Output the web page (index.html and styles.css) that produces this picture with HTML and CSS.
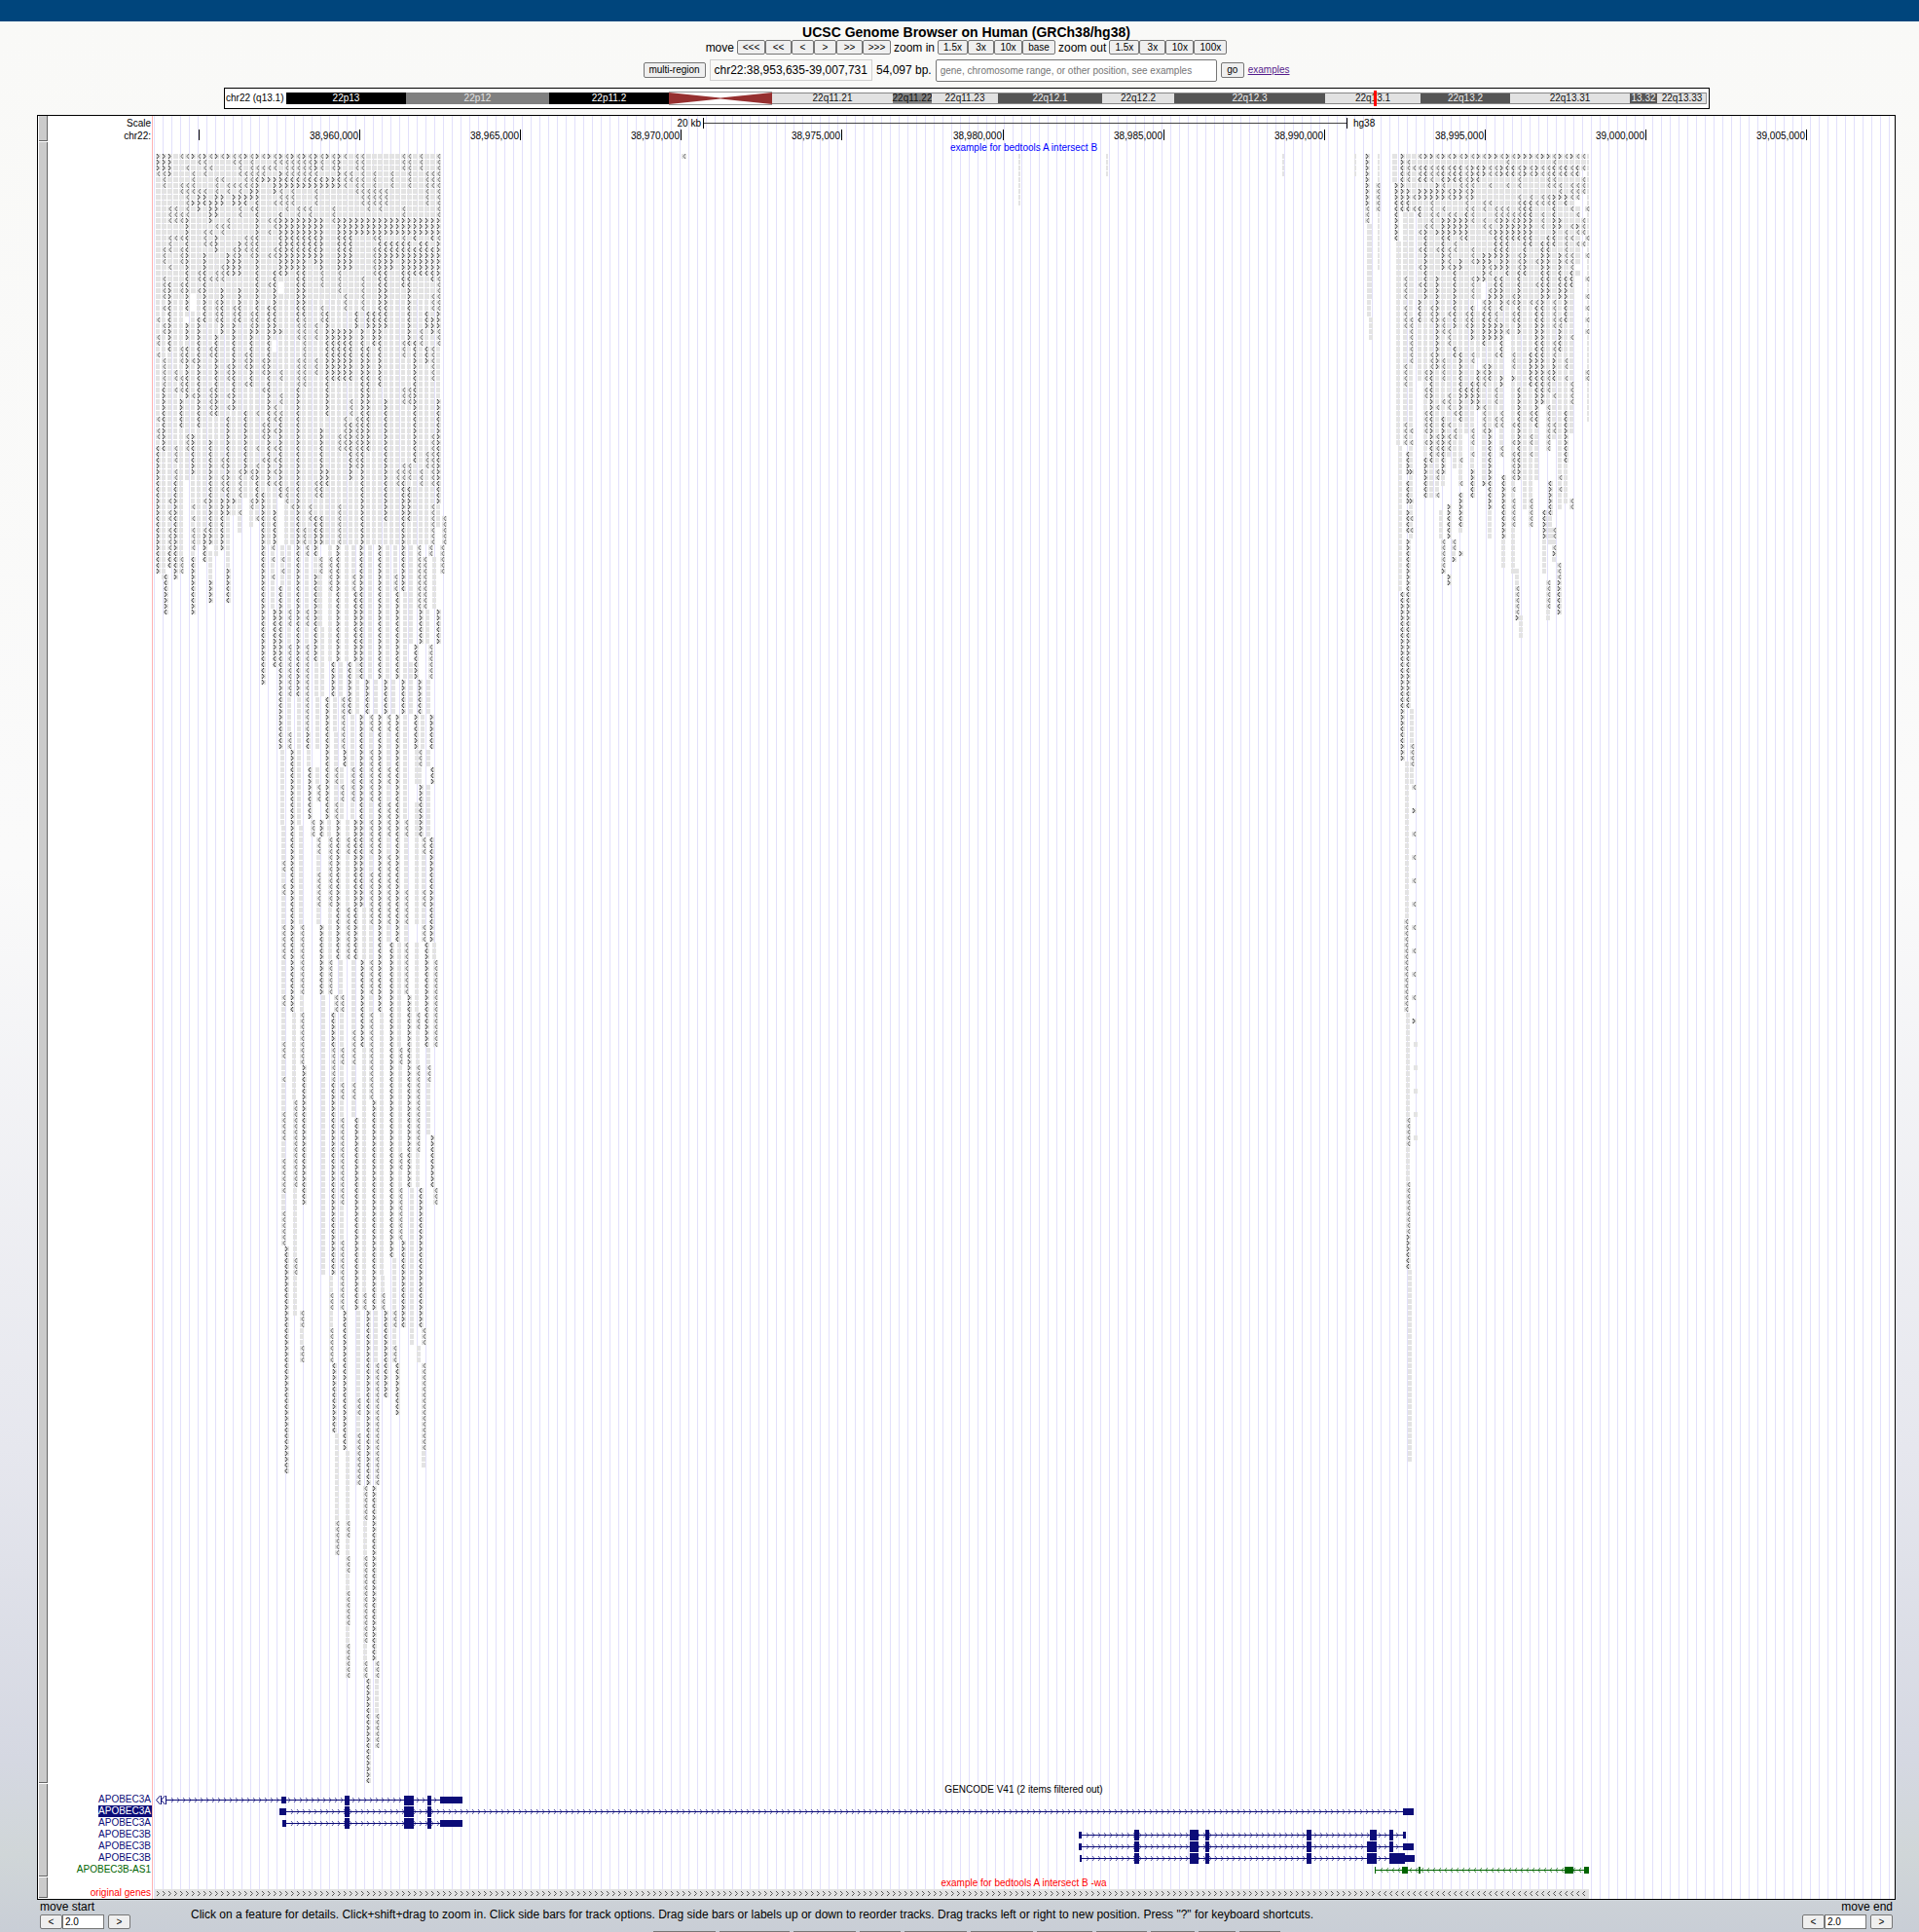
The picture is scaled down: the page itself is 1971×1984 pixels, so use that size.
FILE: index.html
```html
<!DOCTYPE html>
<html lang="en">
<head>
<meta charset="utf-8">
<title>UCSC Genome Browser on Human (GRCh38/hg38)</title>
<link rel="stylesheet" href="styles.css">
</head>
<body>
<div class="topbar"></div>
<main class="page">
  <header class="head">
    <h1 class="title">UCSC Genome Browser on Human (GRCh38/hg38)</h1>
    <div class="nav">
      <span>move</span>
      <div class="group"><button class="w29">&lt;&lt;&lt;</button><button class="w27">&lt;&lt;</button><button class="w23">&lt;</button><button class="w23">&gt;</button><button class="w27">&gt;&gt;</button><button class="w29">&gt;&gt;&gt;</button></div>
      <span>zoom in</span>
      <div class="group"><button class="w31">1.5x</button><button class="w27">3x</button><button class="w29">10x</button><button class="w34">base</button></div>
      <span>zoom out</span>
      <div class="group"><button class="w31">1.5x</button><button class="w27">3x</button><button class="w29">10x</button><button class="w34">100x</button></div>
    </div>
    <form class="search" onsubmit="return false">
      <button class="tall w64">multi-region</button>
      <span class="position">chr22:38,953,635-39,007,731</span>
      <span>54,097 bp.</span>
      <input class="find" type="text" aria-label="Position or search term" placeholder="gene, chromosome range, or other position, see examples">
      <button class="tall w24">go</button>
      <a class="examples" href="#examples">examples</a>
    </form>
  </header>

  <div class="ideogram">
    <svg id="ideo" width="1524" height="20" role="img" aria-label="chr22 ideogram"></svg>
  </div>

  <section class="panel">
    <div class="track">
      <button class="side" aria-label="Ruler options"></button>
      <div class="labels ruler-labels"><span>Scale</span><span>chr22:</span></div>
      <div class="plot"><svg id="ruler" width="100%" height="27"></svg></div>
    </div>
    <div class="track">
      <button class="side" aria-label="Intersect track options"></button>
      <div class="labels"></div>
      <div class="plot">
        <div class="caption blue">example for bedtools A intersect B</div>
        <svg id="reads" width="100%" height="1674"></svg>
      </div>
    </div>
    <div class="track">
      <button class="side" aria-label="GENCODE options"></button>
      <div class="labels gene-labels">
        <a href="#g1">APOBEC3A</a><a class="picked" href="#g2">APOBEC3A</a><a href="#g3">APOBEC3A</a><a href="#g4">APOBEC3B</a><a href="#g5">APOBEC3B</a><a href="#g6">APOBEC3B</a><a class="green" href="#g7">APOBEC3B-AS1</a>
      </div>
      <div class="plot">
        <div class="caption">GENCODE V41 (2 items filtered out)</div>
        <svg id="genes" width="100%" height="84"></svg>
      </div>
    </div>
    <div class="track">
      <button class="side" aria-label="Original genes options"></button>
      <div class="labels gene-labels"><a class="red" href="#orig">original genes</a></div>
      <div class="plot">
        <div class="caption red">example for bedtools A intersect B -wa</div>
        <svg id="orig" width="100%" height="10"></svg>
      </div>
    </div>
  </section>

  <footer class="foot">
    <div class="shift">
      <label for="start">move start</label>
      <div class="shift-row"><button class="w23">&lt;</button><input id="start" type="text" value="2.0"><button class="w23 apart">&gt;</button></div>
    </div>
    <p class="help">Click on a feature for details. Click+shift+drag to zoom in. Click side bars for track options. Drag side bars or labels up or down to reorder tracks. Drag tracks left or right to new position. Press "?" for keyboard shortcuts.</p>
    <div class="shift end">
      <label for="end">move end</label>
      <div class="shift-row"><button class="w23">&lt;</button><input id="end" type="text" value="2.0"><button class="w23 apart">&gt;</button></div>
    </div>
  </footer>
  <div class="next-row"><i class="w64"></i><i class="w72"></i><i class="w64"></i><i class="w42"></i><i class="w64"></i><i class="w64"></i><i class="w57"></i><i class="w52"></i><i class="w45"></i><i class="w38"></i><i class="w42"></i></div>
</main>
<script src="tracks.js"></script>
</body>
</html>
```

FILE: styles.css
```css
* { box-sizing: border-box; }
html { min-height: 100%; }
body {
  margin: 0;
  font: 12px/14px "Liberation Sans", Arial, sans-serif;
  color: #000;
  background: linear-gradient(#f9f9f7 0%, #fafafa 45%, #e6e7ee 75%, #d5d8e2 91%, #d0d6d8 96%, #c9ced6 100%);
}
.topbar { height: 22px; background: #00457c; }
.page { margin: 0 24px 0 38px; }
.head { display: flex; flex-direction: column; align-items: center; }
.title { margin: 3px 0 0; font-size: 14px; line-height: 16px; font-weight: bold; }
.nav { display: flex; align-items: center; gap: 3px; height: 15px; }
.group { display: flex; }
button {
  height: 15px;
  padding: 0;
  border: 1px solid #767676;
  border-radius: 2px;
  background: #efefef;
  color: #000;
  font: 10px/12px "Liberation Sans", Arial, sans-serif;
}
.tall { height: 16px; }
.w23 { width: 23px; }
.w24 { width: 24px; }
.w27 { width: 27px; }
.w29 { width: 29px; }
.w31 { width: 31px; }
.w34 { width: 34px; }
.w38 { width: 38px; }
.w42 { width: 42px; }
.w45 { width: 45px; }
.w52 { width: 52px; }
.w57 { width: 57px; }
.w64 { width: 64px; }
.w72 { width: 72px; }
.search { display: flex; align-items: center; gap: 4px; height: 24px; margin-top: 4px; }
.position { padding: 3px 4px; border: 1px solid #d0d0d0; height: 22px; }
.find {
  width: 289px;
  height: 23px;
  padding: 1px 4px;
  border: 1px solid #767676;
  border-radius: 2px;
  background: #fff;
  font: 10px/12px "Liberation Sans", Arial, sans-serif;
}
.find::placeholder { color: #757575; }
.examples { font-size: 10px; color: #551a8b; }

.ideogram { width: fit-content; margin: 6px auto 0; border: 1px solid #000; background: #fff; }
svg { display: block; overflow: hidden; }
svg text { font: 10px "Liberation Sans", Arial, sans-serif; }

.panel { margin-top: 6px; border: 1px solid #000; background: #fff; }
.track { display: grid; grid-template-columns: 10px 107px 1fr; }
.side {
  width: 9px;
  height: auto;
  margin: 0 0 1px 1px;
  border-width: 0 1px 1px 0;
  border-color: #666;
  border-radius: 0;
  background: #cbcbcb;
}
.labels { padding-right: 1px; text-align: right; font-size: 10px; }
.ruler-labels { display: flex; flex-direction: column; line-height: 13px; padding-top: 1px; }
.gene-labels { display: flex; flex-direction: column; align-items: flex-end; padding-top: 10px; padding-right: 0; line-height: 12px; }
.gene-labels a { padding-right: 1px; color: #0c0c78; text-decoration: none; }
.gene-labels .picked { background: #0c0c78; color: #fff; }
.gene-labels .green { color: #006400; }
.gene-labels .red, .red { color: #f00; }
.blue { color: #00f; }
.plot {
  min-width: 0;
  border-left: 1px solid #ffb3b3;
  background: linear-gradient(90deg, #e2e0fb 1px, transparent 1px) 10px 0 / 9px 100%;
}
.caption { text-align: center; font-size: 10px; line-height: 12px; height: 12px; }

.foot { display: flex; justify-content: space-between; padding: 0 3px; height: 32px; }
.shift { display: flex; flex-direction: column; gap: 1px; line-height: 14px; }
.shift-row { display: flex; }
.shift-row input { width: 43px; height: 15px; padding: 0 2px; border: 1px solid #767676; font: 10px/12px "Liberation Sans", Arial, sans-serif; }
.apart { margin-left: 4px; }
.end { text-align: right; }
.help { flex: 1; margin: 8px 0 0 62px; }
.next-row { display: flex; justify-content: center; gap: 4px; height: 1px; }
.next-row i { background: #767676; }
```

FILE: tracks.js
```js
// Shared helpers. Drawing coordinates are those of the whole browser image;
// each track shifts them by its own origin.
const NS = 'http://www.w3.org/2000/svg';
function add(parent, tag, attrs, text) {
  const el = document.createElementNS(NS, tag);
  for (const key in attrs) el.setAttribute(key, attrs[key]);
  if (text) el.textContent = text;
  parent.appendChild(el);
  return el;
}
function layer(id, x, y) {
  return add(document.getElementById(id), 'g', { transform: `translate(${-x} ${-y})` });
}

// Chromosome ideogram: name, start, end, fill, text colour
const ideo = layer('ideo', 231, 91);
add(ideo, 'text', { x: 232, y: 104 }, 'chr22 (q13.1)');
[
  ['22p13', 294, 417, '#000', '#fff'], ['22p12', 417, 564, '#808080', '#e4e4e4'], ['22p11.2', 564, 687, '#000', '#fff'],
  ['22q11.21', 793, 917, '#e2e2e2', '#111'], ['22q11.22', 917, 957, '#808080', '#111'], ['22q11.23', 957, 1025, '#e2e2e2', '#111'],
  ['22q12.1', 1025, 1132, '#555', '#eee'], ['22q12.2', 1132, 1206, '#e2e2e2', '#111'], ['22q12.3', 1206, 1361, '#555', '#eee'],
  ['22q13.1', 1361, 1459, '#e2e2e2', '#111'], ['22q13.2', 1459, 1551, '#555', '#eee'], ['22q13.31', 1551, 1674, '#e2e2e2', '#111'],
  ['13.32', 1674, 1702, '#555', '#eee'], ['22q13.33', 1702, 1753, '#e2e2e2', '#111']
].forEach(([name, a, b, fill, ink]) => {
  add(ideo, 'rect', { x: a, y: 95, width: b - a, height: 12, fill });
  if (a > 700) add(ideo, 'path', { d: `M${a} 95.5H${b}M${a} 106.5H${b}`, stroke: '#888' });
  add(ideo, 'text', { x: (a + b) / 2, y: 104, fill: ink, 'text-anchor': 'middle' }, name);
});
add(ideo, 'path', { d: 'M687 95L740 100.500 793 95V107L740 101.500 687 107Z', fill: '#963030' });
add(ideo, 'path', { d: 'M687 94.500H793M687 107.500H793M1752.500 95V107', stroke: '#999' });
add(ideo, 'rect', { x: 1411, y: 93, width: 3, height: 16, fill: '#f00' });

// Ruler
const ruler = layer('ruler', 157, 119);
add(ruler, 'path', { d: 'M723 126.500H1383', stroke: '#444' });
add(ruler, 'path', { d: 'M722.500 121V132M1383.500 121V132', stroke: '#000' });
add(ruler, 'text', { x: 720, y: 130, 'text-anchor': 'end' }, '20 kb');
add(ruler, 'text', { x: 1390, y: 130 }, 'hg38');
['', '38,960,000', '38,965,000', '38,970,000', '38,975,000', '38,980,000', '38,985,000', '38,990,000', '38,995,000', '39,000,000', '39,005,000']
  .forEach((name, i) => {
    const x = 204 + Math.round(i * 165.1);
    add(ruler, 'rect', { x, y: 133, width: 1, height: 11, fill: '#000' });
    if (name) add(ruler, 'text', { x: x - 1, y: 143, 'text-anchor': 'end' }, name);
  });

// Reads. Each entry: left edge, first row, then runs of
// g plain, l reverse, r forward, z mixed strands, n narrow, e nothing.
const upperLeft = [
  [268,0,'l1 g1 l2 r1 g27 g3 l3 g2 l1 g5 l3 g3 l1 g5 z31'],
  [274,0,'r1 g1 l1 g1 r1 g6 l1 g1 l1 g3 l1 g4 l1 g3 z31 g30'],
  [280,0,'l1 l2 g1 r3 g1 l1 g2 l2 g3 l2 g2 z11 g1 e2 g9 l3 g1 l1 g2 l1 g1 l1 g1 l1 g1 l1 g4 z10'],
  [286,0,'r1 l1 g1 r3 l3 g1 z11 g1 e2 g6 r1 g6 l2 g2 l2 g1 l1 z14'],
  [292,0,'l4 z2 g1 l2 l1 g1 r10 g36 l3 g8'],
  [298,0,'r1 l3 z2 l3 g2 z9 g40 l1 g10'],
  [304,0,'l1 l3 z2 g3 l2 r3 z15 l3 g3 l5 z50'],
  [310,0,'r1 l4 z1 g3 l1 g1 z17 l3 l5 l4 g24 l6'],
  [316,0,'l4 z2 g3 l2 z7 g42 l3 g6'],
  [322,0,'r3 l1 z2 l3 g2 z8 g10 l3 g3 l3 g18 l3 g3 z14'],
  [328,0,'l3 g1 z2 g5 r9 l3 g3 l3 g18 z12 g3 z9'],
  [334,0,'r1 g3 r2 g21 z18 g9 z3 g12'],
  [340,0,'l3 g1 r2 g3 l3 g18 z9 g30'],
  [346,0,'r4 z2 g5 z9 l4 g6 z9 g9 l3 g9 l9'],
  [352,0,'l1 g2 l3 g5 z9 g4 l3 g3 z9 g6 l6 g17'],
  [358,0,'g3 l2 g6 z9 g10 z9 g3 l3 g1 z10 g11'],
  [364,0,'l3 g1 l3 g4 z3 g13 z3 g15 l9 g14'],
  [370,0,'l9 r0 g2 z3 g7 l6 g3 z38'],
  [376,0,'g6 l4 g1 z3 g13 z3 g3 z18 g18'],
  [382,0,'g3 l6 g2 z3 l1 g1 l5 g6 z6 g36'],
  [388,0,'g6 l4 g1 z5 z24 g27'],
  [394,0,'g6 l3 g2 z3 g1 z15 g12 z21 g6'],
  [400,0,'g3 l3 g5 z3 g1 z5 g50'],
  [406,0,'g11 z3 g1 z3 g36 l3 g12'],
  [412,0,'l3 g6 l2 r3 l1 z8 g9 l3 g5 l3 g10 l3 z12 l3'],
  [418,0,'l3 l3 g5 z3 g1 z18 g7 l3 g10 l3 g1 z6 g4'],
  [424,0,'g11 z4 g1 z5 g11 z21 g18'],
  [430,0,'l3 g8 z3 g1 z6 g9 l3 g21 l3 g10'],
  [436,0,'g3 l6 g2 z3 g1 z6 g6 z3 g3 z3 g15 l3 g16'],
  [442,0,'g3 l3 g5 z4 g1 z6 g2 l3 g1 r3 g2 l6 g9 l9 g3 l8'],
  [448,0,'l11 r3 l1 r6 l6 r3 l3 g9 z18 g4'],
  [454,62,'l10']
];
const columns = [
  // left cluster, short columns
  [160,0,'r3 l1 g24 l1 g2 l2 g1 l1 g10 l1 g1 l2 g1 z22'],
  [166,0,'r3 l3 g10 l3 g2 l4 g1 l1 g2 l2 g4 l5 z11 g22'],
  [168,72,'z7'],
  [172,0,'r4 g5 l3 g2 l3 g2 l1 g2 z12 g25 l1 g1 l2 g1 l4 z3'],
  [178,0,'g9 l3 g2 l1 g22 l2 g1 l1 g9 l3 g1 l2 z15 r2'],
  [184,0,'l1 g4 l2 g3 l2 g2 l1 g1 l3 g3 l2 g3 g6 l3 g2 l3 g1 z5 g22 l3'],
  [190,0,'l1 g1 l1 g2 l2 l4 z16 g1 e1 z3 g1 z9 g6 l3 g5'],
  [196,0,'r1 g2 l4 g1 r1 g15 e3 g8 l1 g5 l1 g6 z7 g5 l1 g1 l1 g1 l4 g1 z10'],
  [202,0,'l1 l1 g4 l1 r3 g10 l2 g1 l1 g4 z19 g20'],
  [208,0,'r1 l2 l1 g2 l1 z2 g4 l3 g1 z12 g30 l1 g4 l1 z5'],
  [214,0,'l1 g1 l1 g5 r4 g1 l1 g1 l1 g5 l1 g11 l2 g5 l5 g4 z18 e1 g5 r4'],
  [220,0,'r1 g3 l3 r4 g1 l1 g1 r3 g3 l1 l1 g3 l4 g2 z14 g24'],
  [226,0,'l1 g3 l1 g2 r2 g3 l2 g3 g2 l3 g1 z8 g21 l2 g1 l3 g1 z9'],
  [232,0,'r1 g4 l2 g4 l2 g4 z4 g15 l3 g2 l1 g1 l1 g1 z17 g9 z6'],
  [238,0,'l1 l1 g3 l1 g1 r2 g7 l2 r3 g5 l3 z15 g15 r1 g2'],
  [244,0,'l4 g1 l2 r2 l2 g4 r6 g2 z6 g25 l5 g2 l1 g3'],
  [250,0,'r1 g2 l3 g1 z2 g5 l3 g17 l3 g2 l1 g4 z11 g4'],
  [256,0,'l1 l2 l3 r2 g1 l1 g4 l4 g9 l3 z10 g14 l2 g3 l2 g3'],
  [262,0,'r1 g1 l2 z27 g13 l1 g5 l1 g2 l1 z6 g2 l1'],
  // left cluster, rows 67 to 116
  [268,67,'z24'],
  [278,67,'l1 g1 l1 g2 l1 g5'], [280,78,'z10'],
  [288,67,'g2 l1 g1 l1 g2'], [286,74,'z28'], [288,102,'g13'],
  [295,67,'g11 l3 g3 l9 g6 l3'], [298,102,'z45'],
  [304,67,'z26'], [305,93,'g22'],
  [313,67,'l2 g9 l3 g3 l15'], [314,99,'z3'], [315,102,'g3'], [316,105,'z9'], [319,114,'l3'],
  [322,67,'z2 g3 z15'], [323,87,'g6'], [324,93,'g9 e3 g3'], [325,108,'l3'], [328,114,'z3'],
  [327,69,'l3 g9'], [329,81,'g12'], [334,93,'z21'], [336,114,'g3'],
  [337,67,'g2 l6 g12'], [340,87,'z6'], [342,93,'g6'], [343,99,'g6 l3 g3 l3'],
  [345,67,'z20'], [348,87,'g6'], [350,93,'l9'], [352,102,'z3'], [349,105,'g3 l3 g3'], [345,114,'z24'],
  [354,67,'g20'], [357,87,'z9'], [360,96,'g9 l6 g3'], [355,114,'g3 l3 g9 l9'],
  [361,67,'g5 l3'], [363,75,'z12'], [365,87,'g9'], [363,114,'z24'],
  [369,67,'z23 e6 z33'], [375,90,'z6'],
  [378,67,'g23'], [379,96,'l3 g3 l9 g3 l6 g3 l9 g6 l6 g3 l15'], [384,90,'g6'],
  [388,67,'z23'], [394,90,'z6'], [388,96,'z51'],
  [396,67,'g23'], [402,90,'g6'], [397,96,'l3 g6 l3 g3 l6 g3 l12 g3'],
  [404,67,'g5 l3'], [406,75,'z15'], [412,90,'z6'], [406,96,'z39'],
  [412,67,'z8'], [414,75,'g15 e6 g18'], [415,114,'l3 g9 l6 g3 l9'],
  [420,67,'g17 e3 g9'], [425,84,'z6 e6 z6'], [426,102,'g6 e3 g21'],
  [428,67,'l11'], [430,78,'z6'], [429,90,'z6'], [432,96,'g6'], [429,102,'l3 g3'], [430,108,'z9'],
  [434,69,'l9'], [437,78,'g6'], [440,84,'l6'], [438,90,'g6'], [441,96,'z6'], [438,102,'g3'], [442,105,'z3'], [438,108,'g9'],
  [440,67,'l2'], [444,69,'g9'], [448,78,'z6'], [452,67,'l5'],
  // left cluster, rows 115 down
  [289,115,'g6 l2 g2 l2 g5 l6 g6 l2 g6 l3 g3 l1 g5 l5 g3 l6 g3 l6'], [292,187,'z39'],
  [300,147,'g15'], [301,162,'l15 g12 l3 g7'],
  [307,115,'g17'], [308,132,'l12 g3 l9'], [310,156,'z24'], [308,198,'l3 g3 l3'],
  [325,117,'l3 g3 l6 g3'], [328,132,'z12'], [330,144,'g48'],
  [337,117,'l12 g9 l6'], [340,147,'z6 l6 z33'], [338,192,'g3 l3 g3 l6'], [341,207,'z12'], [344,219,'g15 l6'],
  [348,138,'g6'], [343,144,'l3'], [349,144,'l3 g6 l3 g3 l3 g3 l15 g6 l12'], [352,198,'z24'],
  [355,222,'g12 l3 g3 l3 g3 l6 g3 l6'],
  [361,138,'g12 l6 g3 l3 g3'], [364,165,'z33'], [366,198,'g15 l3 g3 l9'],
  [372,129,'g9'], [370,138,'z15'], [372,153,'g42 l3'], [376,198,'z30'], [373,228,'l6 g6 l15 g3 l3'], [376,261,'z18'],
  [382,162,'z36'], [384,198,'g9'], [385,207,'l21'], [382,228,'z30'], [385,258,'l3 g6 l6'],
  [390,147,'g45'], [391,192,'g3 l3'], [394,198,'z15'],
  [400,135,'z54'], [403,189,'g9 l3 g3 l3'], [406,207,'z9'],
  [408,135,'g18'], [409,153,'l3 g15 l3 g3 l9'], [412,186,'z15'],
  [418,144,'z33'], [421,177,'g27'],
  [426,135,'g12'], [427,147,'l3 g6 l15 g6'], [430,177,'z24'], [433,201,'l3'], [428,204,'g3'], [433,207,'l15 g3'],
  [433,117,'l3 g6 l3 g3 l3'], [436,135,'z18'], [438,153,'g3 l3 g9'], [442,168,'z9'], [445,177,'l3'],
  [441,117,'z18'], [444,135,'g3'], [445,138,'l15'],
  // single read and the faint ones between the clusters
  [700,0,'l1'], [1046,0,'n9'], [1136,0,'n4'], [1317,0,'n4'], [1391,0,'n4'],
  // right cluster
  [1402,0,'r9 l3'], [1404,12,'g16'], [1406,28,'g4'],
  [1415,0,'n5'], [1413,5,'l5'], [1415,10,'n10'],
  [1430,0,'g5'], [1432,5,'z10'], [1434,15,'g35'], [1436,50,'g25'], [1438,75,'z29'],
  [1438,0,'z10'], [1441,10,'g11 l4 g1 l4 g6 l4 g6 l4'],
  [1444,51,'z4 e1 z4 e1 z4 e1 z29'],
  [1444,0,'g1 l4 g1 z4'], [1447,10,'g18 l8 g11 l1 g1 l1 g4 r1 g4 r1 g2 l1 g1 l1 g1'],
  [1448,95,'g6 l4 g3'],
  [1450,0,'g2 l1 g4 l1 g1 l1'],
  [1456,0,'l1 g1 l2 z1 g1 r2 g1 z2 g2 l1 g2 l1 g2 l1 g2 l1 g2 z4 g10'],
  [1462,0,'r1 g1 z3 g1 r2 g4 l1 z12 g12 l2 g1 l2 g2 l4 g1 l1 g2 z7'],
  [1468,0,'z1 g1 l3 g1 z2 l1 l4 g13 l3 g5 l3 z16 g6'],
  [1474,0,'l1 g1 l2 g1 z3 g2 l1 g2 r1 g2 l1 g4 r16 g6 l1 g4 l4 g2 l2 g2 l1'],
  [1478,61,'g5'], [1480,66,'l5 r1'],
  [1480,0,'r1 g1 z3 l1 z2 g1 l1 g1 z9 g8 l3 g4 l4 g3 l1 g2 z10 g2'], [1486,60,'z6 e6 z2'],
  [1486,0,'l1 g1 l2 r1 g1 l2 g2 l1 z4 g1 l4 g7 l1 g2 l3 g8 l3 g2 l1 g1 l3 g1'], [1491,66,'l2 g1 r1'],
  [1492,0,'r1 g1 z3 g1 r2 g2 l1 z3 g1 l2 g2 z11 g3 z2 g9 l1 g2 l2 g5'],
  [1498,0,'l1 g1 z3 l1 z2 g3 z3 l1 g3 z2 g14 z12 g6 l1 g3 l1 e1 z6 g1 e3 r1'],
  [1504,0,'r1 g1 l2 l2 l2 l2 z5 g12 l3 g10 z2 g6'],
  [1510,0,'l1 g1 r3 l1 z2 g1 l1 l2 g4 l3 g2 l4 g1 z6 g2 l2 g3 z4 g4 l3 g1 l1 g2 z5'],
  [1516,0,'z1 g1 z3 g13 r1 g2 r1 g3 e2 g2 g6 e2 z7'],
  [1522,0,'l1 g1 r2 g4 l2 g1 l2 g4 z3 r2 e3 l2 z6 g3 l4 g3 l5 g8 r1'],
  [1528,0,'r1 g1 l2 g1 l1 g2 l1 g3 l2 g3 r2 l2 g2 l1 z8 g4 z3 g8 z14 g5'],
  [1534,0,'z1 g1 l2 g5 l3 g1 z5 g1 r1 g1 z4 g2 l2 z3 g2 l1 g5 l3 g2 l2'],
  [1540,0,'l1 g1 r2 g5 l2 z8 r1 g1 z6 g2 z6 g3 r2 g4 l3 g3 l2'], [1542,55,'z11 g5'],
  [1546,0,'r1 l1 z2 g1 l1 g3 l2 z10 g4 l1 g4 l1'],
  [1552,0,'l1 g1 z2 g6 l2 z3 g9 l2 g1 l2 g5 l3 g1 r1 g7 l1 g2 l1 g1 l5 g1 l1 g1 l5 g8'],
  [1558,0,'r1 g1 l2 l2 g1 l4 z4 g2 l3 z11 g9 z16'], [1556,71,'g3 l5 r1'], [1560,79,'g4'],
  [1564,0,'z1 g1 r2 g4 z13 g10 g30'],
  [1570,0,'r1 g1 l2 g3 l1 z8 g9 l1 g8 z6 g4 l2 g2 l2 g1 l1 g7 l5'],
  [1576,0,'l1 g1 r2 g4 l1 g9 l1 g3 l1 g2 l1 z21 g9'],
  [1582,0,'z1 g1 l2 g3 l2 g1 l3 g2 z28'], [1584,61,'z5 g6'],
  [1588,0,'r1 g1 l2 l2 g1 l2 g5 z11 g12 l4 g2 l8'], [1590,56,'z6 g5'], [1588,73,'l5 g2'],
  [1594,0,'l1 l1 z2 l2 g1 z9 g9 l5 g2 l3 z4 g2 l1 g4 l2 g1'], [1594,64,'l2 g1 l1 r1 g1'],
  [1600,0,'r1 g1 l2 g1 l2 z1 g3 z2 g4 z8 g3 l2 z4 g21 l1 g1 l1 g3'],
  [1599,70,'l3 z6'],
  [1606,0,'l1 g1 z2 g3 z2 g4 l6 g2 z8 g6 l2 g1 l1 g5 z9 g7'],
  [1612,0,'r1 g1 l2 g1 l2 l1 g1 l1 g2 l1 g1 l1 g2 l3 z3 g8 l1 g1 g6 l4 g5 e11 l2'],
  [1618,0,'l1 g1 z2 g1 l1 l2 e1 g1 l1 g1 r1 l1 g1 l1 g3 e1 g1'],
  [1624,0,'l1 g1 l1 e1 l3 e4 l3 e1 l1'],
  [1630,0,'n9 n4 n1 n2 n30'], [1628,9,'l1 e4 l1 e2 l1 e3 l1 e2 l1 e1 l1 e1 l1 e1 l1 e6 l2'],
  // long column on the right
  [1443,104,'g27'], [1442,131,'l16'], [1444,147,'g18 l5 g6 l9'], [1444,185,'z6'], [1446,191,'g33'],
  [1450,108,'l1 e3 r1 e3 l1 e3 l1 e3 l1 e3 l1 e3 l1 e3 l1 e3 l1 e3 l1 e3 r1'],
  [1452,152,'g1 e3 g1 e3 g1 e3 g1 e3 g1']
];
let boxes = '', soft = '', sharp = '';
function drawColumn([x, first, runs], lastRow) {
  let row = first;
  runs.split(' ').forEach(run => {
    const kind = run[0];
    for (let n = +run.slice(1); n > 0 && row < lastRow; n--, row++) {
      if (kind === 'e') continue;
      const y = 158 + row * 6;
      const w = kind === 'n' ? 2 : kind === 'g' && row > 24 ? 4 : 5;
      boxes += `M${x} ${y}h${w}v5h-${w}z`;
      if (kind === 'l') soft += `M${x + 4} ${y}l-2 2.500l2 2.500`;
      const forward = kind === 'r' || (kind === 'z' && Math.floor((row + x) / 3) % 2);
      if (forward) sharp += `M${x + 1} ${y}l2 2.500l-2 2.500`;
      else if (kind === 'z') sharp += `M${x + 3} ${y}l-2 2.500l2 2.500`;
    }
  });
}
upperLeft.forEach(column => drawColumn(column, 67));
columns.forEach(column => drawColumn(column, 279));
const reads = layer('reads', 157, 158);
add(reads, 'path', { d: boxes, fill: '#e3e3e3' });
add(reads, 'path', { d: soft, fill: 'none', stroke: '#707070' });
add(reads, 'path', { d: sharp, fill: 'none', stroke: '#383838' });

// Gene models: line span, strand, full height exons, half height ends
const coreA = [[354, 359], [415, 425], [439, 443]];
const coreB = [[1165, 1170], [1222, 1231], [1238, 1242], [1342, 1347]];
const models = [
  [171, 452, 1, coreA, [[289, 294], [452, 475]]],
  [294, 1441, 1, coreA, [[287, 294], [1441, 1452]]],
  [294, 452, 1, coreA, [[290, 294], [452, 475]]],
  [1111, 1441, 1, [...coreB, [1407, 1414], [1427, 1431]], [[1108, 1111], [1441, 1444]]],
  [1111, 1441, 1, [...coreB, [1404, 1414], [1427, 1431]], [[1108, 1111], [1441, 1452]]],
  [1111, 1441, 1, [...coreB, [1404, 1414], [1427, 1443]], [[1109, 1111], [1443, 1453]]],
  [1413, 1627, -1, [], [[1412, 1413], [1440, 1446], [1457, 1459], [1607, 1616], [1627, 1632]]]
];
const genes = layer('genes', 157, 1844);
models.forEach(([a, b, strand, tall, low], i) => {
  const y = 1848 + i * 12, ink = strand > 0 ? '#0c0c78' : '#006400';
  add(genes, 'path', { d: `M${a} ${y + 0.5}H${b}`, stroke: ink });
  let d = '';
  for (let x = a + 5; x < b - 2; x += 6) d += strand > 0 ? `M${x} ${y - 2}l2 2.500l-2 2.500` : `M${x + 2} ${y - 2}l-2 2.500l2 2.500`;
  add(genes, 'path', { d, fill: 'none', stroke: ink, opacity: 0.7 });
  tall.forEach(([s, e]) => add(genes, 'rect', { x: s, y: y - 5, width: e - s, height: 11, fill: ink }));
  low.forEach(([s, e]) => add(genes, 'rect', { x: s, y: y - 3, width: e - s, height: 7, fill: ink }));
});
add(genes, 'path', { d: 'M164.500 1844l-4 4.500 4 4.500M169.500 1844l-4 4.500 4 4.500M165.500 1844V1853M170.500 1844V1853', fill: 'none', stroke: '#0c0c78' });

// Original genes bar
const orig = layer('orig', 157, 1940);
add(orig, 'rect', { x: 159, y: 1940, width: 1473, height: 10, fill: '#e2e2e2' });
let marks = '';
for (let x = 161; x < 1630; x += 6) marks += x < 1412 ? `M${x} 1942l2.500 2.500l-2.500 2.500` : `M${x + 3} 1942l-2.500 2.500l2.500 2.500`;
add(orig, 'path', { d: marks, fill: 'none', stroke: '#555' });
```
